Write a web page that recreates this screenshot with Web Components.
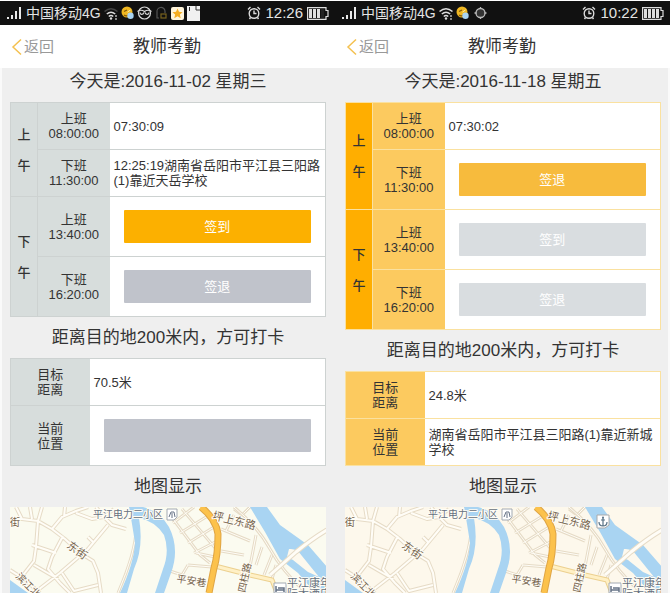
<!DOCTYPE html>
<html lang="zh-CN">
<head>
<meta charset="utf-8">
<title>教师考勤</title>
<style>
body{margin:0;background:#fff;color:#333;font-family:"Liberation Sans","Noto Sans CJK SC",sans-serif;font-size:13px;line-height:15px}
main{display:grid;grid-template-columns:1fr 1fr;padding:1px 0 3px}
.first{--edge-left:2px;--pad-left:8px}
.second{--edge-right:2px;--pad-right:7px;--line:#fae1a0;--head:#fcca5f;--period:#ffae00;--land:#fdf8ec}
</style>
</head>
<body>
<main>
  <phone-screen class="first">
    <status-bar slot="status" time="12:26" wifi="weak" icons="emoji face headset star doc" level="3"></status-bar>
    <title-bar slot="title" back="返回">教师考勤</title-bar>
    <section-title>今天是:2016-11-02 星期三</section-title>
    <attendance-table>
      <attendance-row period="上午" kind="上班" due="08:00:00" text="07:30:09"></attendance-row>
      <attendance-row kind="下班" due="11:30:00" text="12:25:19湖南省岳阳市平江县三阳路(1)靠近天岳学校"></attendance-row>
      <attendance-row period="下午" kind="上班" due="13:40:00" action="签到" tone="#fcb000"></attendance-row>
      <attendance-row kind="下班" due="16:20:00" action="签退" tone="#c0c3cb" idle></attendance-row>
    </attendance-table>
    <section-title>距离目的地200米内，方可打卡</section-title>
    <location-table distance="70.5米"></location-table>
    <section-title>地图显示</section-title>
    <map-view></map-view>
  </phone-screen>
  <phone-screen class="second">
    <status-bar slot="status" time="10:22" wifi="full" icons="emoji target" level="4"></status-bar>
    <title-bar slot="title" back="返回">教师考勤</title-bar>
    <section-title>今天是:2016-11-18 星期五</section-title>
    <attendance-table>
      <attendance-row period="上午" kind="上班" due="08:00:00" text="07:30:02"></attendance-row>
      <attendance-row kind="下班" due="11:30:00" action="签退" tone="#f7bb3d"></attendance-row>
      <attendance-row period="下午" kind="上班" due="13:40:00" action="签到" tone="#d9dde0" idle></attendance-row>
      <attendance-row kind="下班" due="16:20:00" action="签退" tone="#d9dde0" idle></attendance-row>
    </attendance-table>
    <section-title>距离目的地200米内，方可打卡</section-title>
    <location-table distance="24.8米" place="湖南省岳阳市平江县三阳路(1)靠近新城学校"></location-table>
    <section-title>地图显示</section-title>
    <map-view pier></map-view>
  </phone-screen>
</main>
<script>
const esc = s => (s || '').replace(/&/g, '&amp;').replace(/</g, '&lt;');

class BaseElement extends HTMLElement {
  connectedCallback() {
    if (!this.shadowRoot) this.attachShadow({mode: 'open'}).innerHTML = this.render();
  }
}

customElements.define('phone-screen', class extends BaseElement {
  render() {
    return `<style>
      :host{display:flex;flex-direction:column;min-width:0;background:#efefef}
      .body{border:0 solid #fafafa;border-left-width:var(--edge-left,0);border-right-width:var(--edge-right,0);
        padding:0 var(--pad-right,9px) 0 var(--pad-left,10px);flex:1;display:flex;flex-direction:column}
    </style><slot name="status"></slot><slot name="title"></slot><div class="body"><slot></slot></div>`;
  }
});

const ICONS = {
  emoji: `<svg width="13" height="14" viewBox="0 0 13 14"><circle cx="6" cy="6" r="5.5" fill="#efb722"/><path d="M3 5.5l3-1.5M3 9c2 1.500 4 1 5-1" stroke="#80580c" stroke-width="1.300" fill="none"/><circle cx="9.500" cy="9.800" r="3.200" fill="#a9d4f3"/><path d="M6.500 6l3-2" stroke="#fff0b0"/></svg>`,
  face: `<svg width="15" height="14" viewBox="0 0 15 14" fill="none" stroke="#ddd" stroke-width="1.200"><circle cx="7.500" cy="7" r="6"/><path d="M.5 5.500Q4 3 7.500 5.500Q11 3 14.500 5.500M3 6.500c0 2.500 3 2.500 4 0M8 6.500c1 2.500 4 2.500 4 0"/></svg>`,
  headset: `<svg width="13" height="14" viewBox="0 0 13 14" fill="none" stroke="#555" stroke-width="1.200"><path d="M2 12V6a4 4 0 0 1 8-1v2M2 8.500v3.500h2"/><rect x="6" y="8" width="5" height="4" stroke="#79631f"/></svg>`,
  star: `<svg width="13" height="13" viewBox="0 0 13 13"><rect width="13" height="13" rx="2" fill="#fff5dc"/><path d="M6.500 1.500l1.500 3.300 3.600.4-2.700 2.400.8 3.600-3.200-1.900-3.200 1.900.8-3.600L1.400 5.200l3.600-.4z" fill="#f6ae22"/></svg>`,
  doc: `<svg width="13" height="15" viewBox="0 0 13 15"><path d="M0 0h13v15H0z" fill="#f1f1f1"/><path d="M9 0v4h4" fill="none" stroke="#333"/><path d="M2.500 1v4" stroke="#333"/></svg>`,
  target: `<svg width="17" height="14" viewBox="0 0 17 14" fill="none" stroke="#bbb" stroke-width="1.300"><circle cx="8.500" cy="7" r="4.500" fill="#333"/><path d="M8.500 1v2M8.500 11v2M2.500 7h2M12.500 7h2"/></svg>`
};

customElements.define('status-bar', class extends BaseElement {
  render() {
    const weak = this.getAttribute('wifi') === 'weak';
    const outer = weak ? '#444' : '#ddd';
    const level = +this.getAttribute('level');
    const cells = [0, 1, 2, 3].map(i => `<rect x="${2 + i * 4}" y="2" width="3" height="9" fill="${i < level ? '#ddd' : '#222'}"/>`).join('');
    return `<style>
      :host{display:flex;align-items:center;height:24px;padding:0 6px 0 7px;background:#111;color:#e4e4e4;gap:3px;overflow:hidden;white-space:nowrap}
      svg{display:block;flex:none}
      .carrier{font-size:14px;line-height:20px;margin-left:1px}
      .time{font-size:15px;line-height:20px}
      .end{display:flex;align-items:center;gap:4px;margin-left:auto}
    </style>
    <svg width="15" height="14" viewBox="0 0 15 14" fill="#e8e8e8"><path d="M0 11h2v2H0zM4 9h2v4H4zM8 5h2v8H8zM12 1h2v12h-2z"/></svg>
    <span class="carrier">中国移动4G</span>
    <svg width="14" height="13" viewBox="0 0 14 13" fill="none" stroke-width="1.600"><path d="M.5 4.500Q7-1 13.500 4.500" stroke="${outer}"/><path d="M2.800 7Q7 3.500 11.200 7" stroke="#ddd"/><path d="M4.800 9.500Q7 7.500 9.200 9.500" stroke="#ddd"/><circle cx="7" cy="11.500" r="1.200" fill="#ddd"/><path d="M12 8v5" stroke="#ddd" stroke-width="1.200" stroke-dasharray="2 1"/></svg>
    ${this.getAttribute('icons').split(' ').map(n => ICONS[n]).join('')}
    <span class="end">
      <svg width="14" height="14" viewBox="0 0 14 14" fill="none" stroke="#ddd" stroke-width="1.400"><circle cx="7" cy="7.500" r="4.800"/><path d="M7 4.500v3h2.500M1 3.500L3.500 1M13 3.500L10.500 1M3.500 11.500L2.500 13M10.500 11.500l1 1.500"/></svg>
      <span class="time">${esc(this.getAttribute('time'))}</span>
      <svg width="22" height="13" viewBox="0 0 22 13"><path d="M.6.6h18.400V3.500h2v6h-2v2.900H.6z" fill="none" stroke="#ddd" stroke-width="1.200"/>${cells}</svg>
    </span>`;
  }
});

customElements.define('title-bar', class extends BaseElement {
  render() {
    return `<style>
      :host{display:grid;grid-template-columns:1fr auto 1fr;align-items:center;height:43px;background:#fff;padding:0 12px 0 11px}
      a{display:flex;align-items:center;gap:2px;color:#999;font-size:15px;line-height:20px;text-decoration:none}
      h1{margin:0;font-size:17px;line-height:24px;font-weight:400}
      svg{display:block}
    </style>
    <a href="#back"><svg width="11" height="18" viewBox="0 0 11 18" fill="none" stroke="#f4c150" stroke-width="1.500"><path d="M10 1.500L2 9l8 7.500"/></svg>${esc(this.getAttribute('back'))}</a>
    <h1><slot></slot></h1>`;
  }
});

customElements.define('section-title', class extends BaseElement {
  render() {
    return `<style>
      :host{display:block;text-align:center;margin-bottom:6px}
      h2{margin:0;font-size:17px;line-height:28px;font-weight:400;white-space:nowrap}
    </style><h2><slot></slot></h2>`;
  }
});

const TABLE_CSS = `
  :host{display:block;margin-bottom:7px}
  table{width:100%;border-collapse:collapse;table-layout:fixed;background:#fff;border:1px solid var(--line,#cdd2d1)}
  th,td{border:0 solid var(--line,#cdd2d1);border-top-width:1px;padding:8px 0;font-weight:400}
  th{background:var(--head,#d7dddc);text-align:center}
  td{padding-left:4px}
  td.act{padding:13px 14px}
  button,.blank{display:block;box-sizing:border-box;width:100%;height:33px;border:0;border-radius:1px;padding:0;background:var(--tone);color:#fff;font:inherit}
`;

customElements.define('attendance-row', class extends HTMLElement {});

customElements.define('attendance-table', class extends BaseElement {
  render() {
    const rows = [...this.querySelectorAll('attendance-row')].map(r => {
      const a = n => r.getAttribute(n);
      const period = a('period') ? `<th scope="rowgroup" rowspan="2" class="period">${[...a('period')].map(esc).join('<br>')}</th>` : '';
      const cell = a('action')
        ? `<td class="act"><button type="button" style="--tone:${a('tone')}"${r.hasAttribute('idle') ? ' disabled' : ''}>${esc(a('action'))}</button></td>`
        : `<td>${esc(a('text'))}</td>`;
      return `<tr>${period}<th scope="row">${esc(a('kind'))}<br>${esc(a('due'))}</th>${cell}</tr>`;
    }).join('');
    return `<style>${TABLE_CSS}
      .period{background:var(--period,#d7dddc);border-right-width:1px;line-height:31px;font-weight:500}
      .c1{width:27px}.c2{width:72px}
    </style><table><colgroup><col class="c1"><col class="c2"><col></colgroup><tbody>${rows}</tbody></table>`;
  }
});

customElements.define('location-table', class extends BaseElement {
  render() {
    const place = this.getAttribute('place');
    return `<style>${TABLE_CSS}.c1{width:79px}</style>
    <table><colgroup><col class="c1"><col></colgroup><tbody>
      <tr><th scope="row">目标<br>距离</th><td>${esc(this.getAttribute('distance'))}</td></tr>
      <tr><th scope="row">当前<br>位置</th>${place ? `<td>${esc(place)}</td>` : `<td class="act"><div class="blank" style="--tone:#c0c3cb"></div></td>`}</tr>
    </tbody></table>`;
  }
});

customElements.define('map-view', class extends BaseElement {
  render() {
    const minor = `M6 0L12 12L28 14L42 22L55 32L70 46L83 54L88 66L91 86M20 0L22 12M32 0L28 14M42 22L52 10L66 4L78 0M55 0L54 10M0 12L12 12M28 14L26 40L24 54L10 72M22 38L46 46M53 29L42 50L38 62L50 76L60 86M24 58L48 72M24 86L50 66L78 42L98 18M66 6L82 12L94 10L102 18L116 22M78 30L84 36M52 66L64 84L88 78M86 0L94 10L104 2M0 63L14 72L30 86`;
    const east = `M160 8L172 24L190 48L200 56M172 2L206 42M163 16L184 0M170 26L196 10M178 36L204 20M184 46L207 34M178 58L172 68L160 64M186 46L205 50M178 58L202 60M211 22L240 34M211 44L234 48M246 28L238 70L232 86M240 0L232 8L224 2M224 8L216 24M252 40L246 58M262 48L254 68M266 58L262 72`;
    const bank = `M126 22Q126 44 108 86M224 0Q248 20 260 42T296 86`;
    const bridge = `M260 68L286 45Q302 32 317 23`;
    const pier = this.hasAttribute('pier') ? `<g><path d="M252 8h12v10l-4 3h-8z" fill="#fff" stroke="#aaa"/><path d="M258 11v8M256 13h4M254 15q0 4 4 4t4-4" fill="none" stroke="#567083" stroke-width="1.200"/><circle cx="258" cy="10.500" r="1" fill="#567083"/></g>` : '';
    const roads = (d, w) => `<path d="${d}" stroke="#e6dbc6" stroke-width="${w}"/><path d="${d}" stroke="#fffdf7" stroke-width="${w - 2}"/>`;
    return `<style>
      :host{display:block;overflow:hidden;background:var(--land,#fbfbf0)}
      svg{display:block;width:100%;height:86px}
      text{font-size:10px;paint-order:stroke;stroke:#fffdf5;stroke-width:2px;stroke-linejoin:round}
      .road{fill:#75634d}.place{fill:#667080}
      .large{font-size:11px}
    </style>
    <svg viewBox="0 0 316 86" preserveAspectRatio="xMinYMin slice" role="img" aria-label="地图">
      <g fill="none" stroke-linejoin="round">
        ${roads(minor, 4)}${roads(east, 3)}${roads(bank, 3)}
        <path d="M119 0H133Q150 4 159 20Q170 42 161 66L154 86H145L153 62Q160 44 154 28Q145 14 129 11Q134 40 124 62L117 86H110Q124 56 125 36Q122 16 119 0z" fill="#a9d4f2"/>
        <path d="M240 0H257L270 18L298 38L317 60V86H305L288 66L270 52L255 25z" fill="#a9d4f2"/>
        <path d="M279 42Q287 41 292 49L309 70L298 65L283 53L277 50z" fill="#fdf9ee"/>
        <path d="M0 73L18 86H0z" fill="#a9d4f2"/>
        ${roads(bridge, 5)}
        <path d="M205 59L240 68L262 73L267 86" stroke="#ecd08f" stroke-width="5"/><path d="M205 59L240 68L262 73L267 86" stroke="#fff0c5" stroke-width="3"/>
        <path d="M191 0Q206 12 208 27Q208 48 204 61L199 86" stroke="#dfa545" stroke-width="7"/>
        <path d="M191 0Q206 12 208 27Q208 48 204 61L199 86" stroke="#fcc24c" stroke-width="5"/>
      </g>
      <path d="M157 2h10v8l-3 3h-7z" fill="#fff" stroke="#a3aab3"/><path d="M159 10l2-5h3l1 5M162 6v5" fill="none" stroke="#667386"/>
      <path d="M264 76h12v10h-12z" fill="#fff" stroke="#a3aab3"/><path d="M266 79v6M266 83h8M268 81h6v4" fill="none" stroke="#667386" stroke-width="1.500"/>
      ${pier}
      <text class="place" x="83" y="11">平江电力二小区</text>
      <text class="road" x="0" y="19">街</text>
      <text class="road large" transform="translate(56 40) rotate(36)">东街</text>
      <text class="road" transform="translate(5 70) rotate(45)">滨江北</text>
      <text class="road large" transform="translate(202 12) rotate(14)">坪上东路</text>
      <text class="road" transform="translate(235 86) rotate(-78)">四柱路</text>
      <text class="road" transform="translate(166 75) rotate(9)">平安巷</text>
      <text class="place large" x="277" y="80">平江康年</text>
      <text class="place large" x="277" y="91">际大酒店</text>
    </svg>`;
  }
});
</script>
</body>
</html>
